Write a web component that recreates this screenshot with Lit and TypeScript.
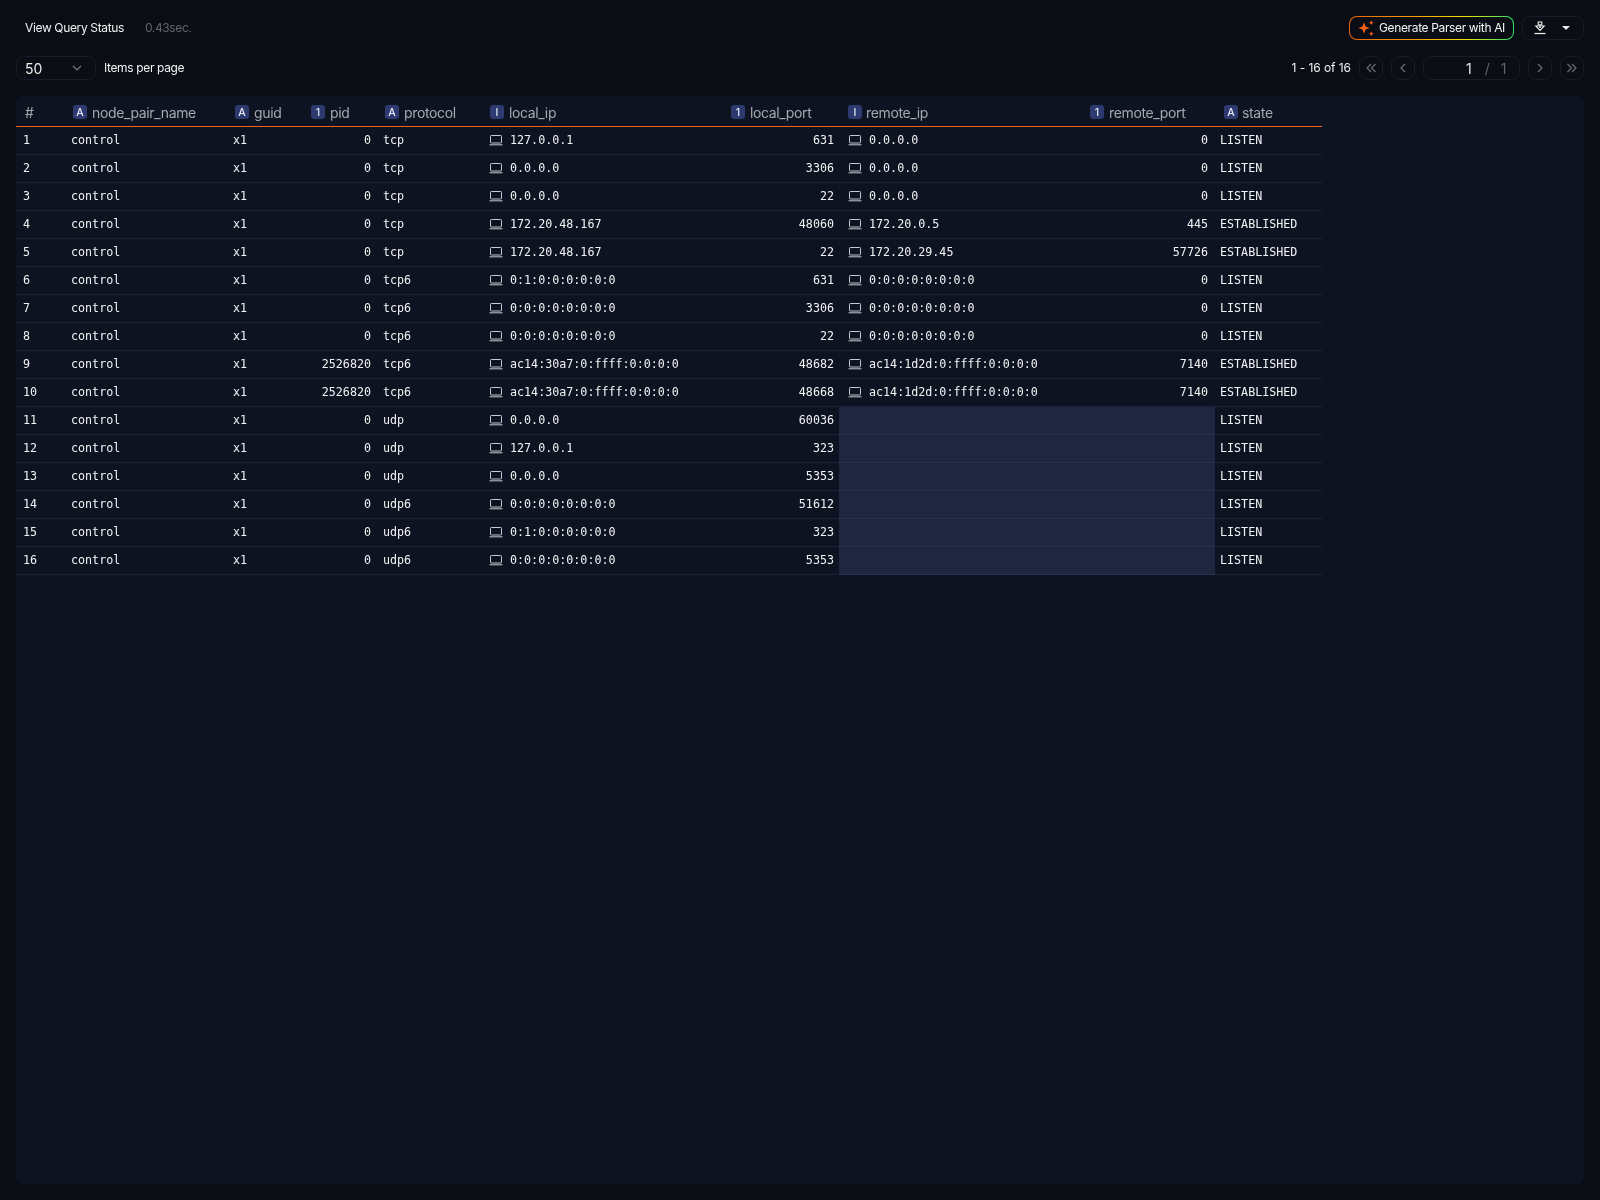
import { LitElement, html, css } from "lit";
import { customElement } from "lit/decorators.js";

type Row = [string, string, string, string, string, string, string];
const rows: Row[] = [
  ["0","tcp","127.0.0.1","631","0.0.0.0","0","LISTEN"],
  ["0","tcp","0.0.0.0","3306","0.0.0.0","0","LISTEN"],
  ["0","tcp","0.0.0.0","22","0.0.0.0","0","LISTEN"],
  ["0","tcp","172.20.48.167","48060","172.20.0.5","445","ESTABLISHED"],
  ["0","tcp","172.20.48.167","22","172.20.29.45","57726","ESTABLISHED"],
  ["0","tcp6","0:1:0:0:0:0:0:0","631","0:0:0:0:0:0:0:0","0","LISTEN"],
  ["0","tcp6","0:0:0:0:0:0:0:0","3306","0:0:0:0:0:0:0:0","0","LISTEN"],
  ["0","tcp6","0:0:0:0:0:0:0:0","22","0:0:0:0:0:0:0:0","0","LISTEN"],
  ["2526820","tcp6","ac14:30a7:0:ffff:0:0:0:0","48682","ac14:1d2d:0:ffff:0:0:0:0","7140","ESTABLISHED"],
  ["2526820","tcp6","ac14:30a7:0:ffff:0:0:0:0","48668","ac14:1d2d:0:ffff:0:0:0:0","7140","ESTABLISHED"],
  ["0","udp","0.0.0.0","60036","","","LISTEN"],
  ["0","udp","127.0.0.1","323","","","LISTEN"],
  ["0","udp","0.0.0.0","5353","","","LISTEN"],
  ["0","udp6","0:0:0:0:0:0:0:0","51612","","","LISTEN"],
  ["0","udp6","0:1:0:0:0:0:0:0","323","","","LISTEN"],
  ["0","udp6","0:0:0:0:0:0:0:0","5353","","","LISTEN"],
];

const cols: [string, string, string][] = [
  ["A","node_pair_name","p7"],["A","guid","p7"],["1","pid","p6"],["A","protocol","p7"],
  ["I","local_ip","p6"],["1","local_port","p6"],["I","remote_ip","p7r"],["1","remote_port","p6"],["A","state","p7r"],
];

const laptop = html`<svg class="lap" viewBox="0 0 14 12" width="14" height="12" fill="none" stroke="currentColor" stroke-width="1"><rect x="1.5" y="1.5" width="11" height="7.5" rx="0.8"/><path d="M0.5 10.8h13"/></svg>`;

@customElement("app-root")
export class AppRoot extends LitElement {
  static styles = css`
    :host { display: block; width: 1600px; height: 1200px; background: #0a0d14; color: #f2f3f5; font-family: Inter, "Liberation Sans", sans-serif; font-size: 12px; letter-spacing: -0.03em; overflow: hidden; }
    .top { height: 56px; display: flex; align-items: center; justify-content: space-between; padding: 0 16px 0 25px; box-sizing: border-box; will-change: opacity; }
    .status { display: flex; gap: 21px; align-items: center; padding-bottom: 1px; }
    .status b { font-weight: 400; color: #f0f1f3; }
    .status span { color: #62656b; }
    .actions { display: flex; gap: 8px; align-items: center; }
    .gen { height: 24px; width: 165px; box-sizing: border-box; border-radius: 8px; border: 1px solid transparent; background: linear-gradient(#0a0d14,#0a0d14) padding-box, linear-gradient(90deg,#e8650f 0%,#f7a70a 45%,#f1e30d 70%,#2fe06a 100%) border-box; display: flex; align-items: center; gap: 3px; padding-left: 8px; color: #f2f3f5; white-space: nowrap; }
    .gen span { padding-bottom: 1px; }
    .dl { height: 24px; width: 62px; box-sizing: border-box; border-radius: 8px; border: 1px solid #161c2c; display: flex; align-items: center; gap: 15px; padding-left: 10px; }
    .tri { width: 0; height: 0; border-left: 4px solid transparent; border-right: 4px solid transparent; border-top: 4px solid #e8e9eb; }
    .pager { height: 24px; margin-bottom: 16px; display: flex; justify-content: space-between; align-items: center; padding: 0 16px; will-change: opacity; }
    .left, .right { display: flex; align-items: center; }
    .sel { width: 80px; height: 24px; box-sizing: border-box; border: 1px solid #161c2c; border-radius: 8px; display: flex; align-items: center; justify-content: space-between; padding: 0 12px 0 8px; font-size: 14px; letter-spacing: 0; color: #eceef0; margin-right: 8px; }
    .btn { width: 24px; height: 24px; box-sizing: border-box; border: 1px solid #161c2c; border-radius: 8px; display: flex; align-items: center; justify-content: center; color: #6a6d74; margin-left: 8px; }
    .count { color: #eceef0; letter-spacing: -0.005em; }
    .left > span, .count { padding-bottom: 1px; }
    .page { width: 97px; height: 24px; box-sizing: border-box; border: 1px solid #161c2c; border-radius: 8px; margin-left: 8px; display: flex; align-items: center; padding-left: 42px; font-size: 14px; letter-spacing: 0; color: #e8e9eb; }
    .page i { font-style: normal; color: #62656b; margin-left: 13px; }
    .page em { font-style: normal; color: #62656b; margin-left: 11px; }
    .panel { margin: 0 16px; height: 1088px; background: #0d1320; border-radius: 8px; }
    table { border-collapse: collapse; table-layout: fixed; width: 1306px; will-change: opacity; }
    th { height: 30px; padding: 3px 0 0 0; box-sizing: border-box; text-align: left; font-weight: 400; font-size: 14px; color: #a5a8ad; border-bottom: 1px solid #f0611e; white-space: nowrap; }
    th.num { padding-left: 9px; }
    th.p6 { padding-left: 7px; }
    th.p7 { padding-left: 8px; }
    th.p7r { padding-left: 9px; }
    th.p7r > div { gap: 4px; }
    th > div { display: flex; align-items: center; gap: 5px; }
    .badge { width: 14px; height: 14px; border-radius: 3px; background: #2d3a70; color: #e6e9f4; font-size: 10.5px; letter-spacing: 0; font-weight: 500; display: flex; align-items: center; justify-content: center; flex: none; }
    td { height: 28px; padding: 0 6px 1px; box-sizing: border-box; border-bottom: 1px solid #1c2338; font-family: "DejaVu Sans Mono", "Liberation Mono", monospace; font-size: 11.7px; letter-spacing: 0; color: #f2f3f5; white-space: nowrap; overflow: hidden; }
    td.idx { padding-left: 7px; }
    td.r { text-align: right; }
    td.rp { padding-right: 5px; }
    td.rq { padding-right: 7px; }
    td.st { padding-left: 5px; }
    td.empty { background: #1f2740; border-bottom-color: #27304f; }
    .ip { display: flex; align-items: center; gap: 7px; }
    td.rem { padding-left: 9px; }
    .lap { color: #c5c8cd; flex: none; }
  `;

  render() {
    const w = [49, 162, 77, 73, 106, 241, 115, 244, 132, 107];
    return html`
      <div class="top">
        <div class="status"><b>View Query Status</b><span>0.43sec.</span></div>
        <div class="actions">
          <div class="gen">
            <svg width="18" height="18" viewBox="0 0 18 18" fill="#f0611e"><path d="M6 3.3 7.6 7.4 11.7 9 7.6 10.6 6 14.7 4.4 10.6 0.3 9 4.4 7.4Z"/><path d="M13.3 1.4 14.1 2.9 15.6 3.7 14.1 4.5 13.3 6 12.5 4.5 11 3.7 12.5 2.9Z"/><path d="M13.3 12.5 14.1 14 15.6 14.8 14.1 15.6 13.3 17.1 12.5 15.6 11 14.8 12.5 14Z"/></svg>
            <span>Generate Parser with AI</span>
          </div>
          <div class="dl">
            <svg width="14" height="14" viewBox="0 0 14 14" fill="none" stroke="#f0f1f3" stroke-width="1.2"><path d="M5.2 1v4H2.8L7 9.4 11.2 5H8.8V1Z" stroke-width="1.1"/><path d="M6.2 3h1.6v4H6.2z" fill="#f0f1f3" stroke="none"/><path d="M1.5 12.5h11"/></svg>
            <span class="tri"></span>
          </div>
        </div>
      </div>
      <div class="pager">
        <div class="left">
          <div class="sel"><span>50</span><svg width="12" height="12" viewBox="0 0 12 12" fill="none" stroke="#777a80" stroke-width="1.2"><path d="M2 4l4 4 4-4"/></svg></div>
          <span>Items per page</span>
        </div>
        <div class="right">
          <span class="count">1 - 16 of 16</span>
          <div class="btn"><svg width="12" height="12" viewBox="0 0 12 12" fill="none" stroke="currentColor" stroke-width="1.2"><path d="M6 2 2 6l4 4M10.5 2l-4 4 4 4"/></svg></div>
          <div class="btn"><svg width="12" height="12" viewBox="0 0 12 12" fill="none" stroke="currentColor" stroke-width="1.2"><path d="M8 2 4 6l4 4"/></svg></div>
          <div class="page"><span>1</span><i>/</i><em>1</em></div>
          <div class="btn"><svg width="12" height="12" viewBox="0 0 12 12" fill="none" stroke="currentColor" stroke-width="1.2"><path d="m4 2 4 4-4 4"/></svg></div>
          <div class="btn"><svg width="12" height="12" viewBox="0 0 12 12" fill="none" stroke="currentColor" stroke-width="1.2"><path d="m1.5 2 4 4-4 4M6 2l4 4-4 4"/></svg></div>
        </div>
      </div>
      <div class="panel">
        <table>
          <colgroup>${w.map((x) => html`<col style="width:${x}px"/>`)}</colgroup>
          <thead><tr>
            <th class="num">#</th>
            ${cols.map(([b, n, p]) => html`<th class=${p}><div><span class="badge">${b}</span>${n}</div></th>`)}
          </tr></thead>
          <tbody>
            ${rows.map((r, i) => html`<tr>
              <td class="idx">${i + 1}</td>
              <td>control</td>
              <td>x1</td>
              <td class="r">${r[0]}</td>
              <td>${r[1]}</td>
              <td><div class="ip">${laptop}${r[2]}</div></td>
              <td class="r rp">${r[3]}</td>
              ${r[4] ? html`<td class="rem"><div class="ip">${laptop}${r[4]}</div></td><td class="r rq">${r[5]}</td>` : html`<td class="empty"></td><td class="empty"></td>`}
              <td class="st">${r[6]}</td>
            </tr>`)}
          </tbody>
        </table>
      </div>
    `;
  }
}
